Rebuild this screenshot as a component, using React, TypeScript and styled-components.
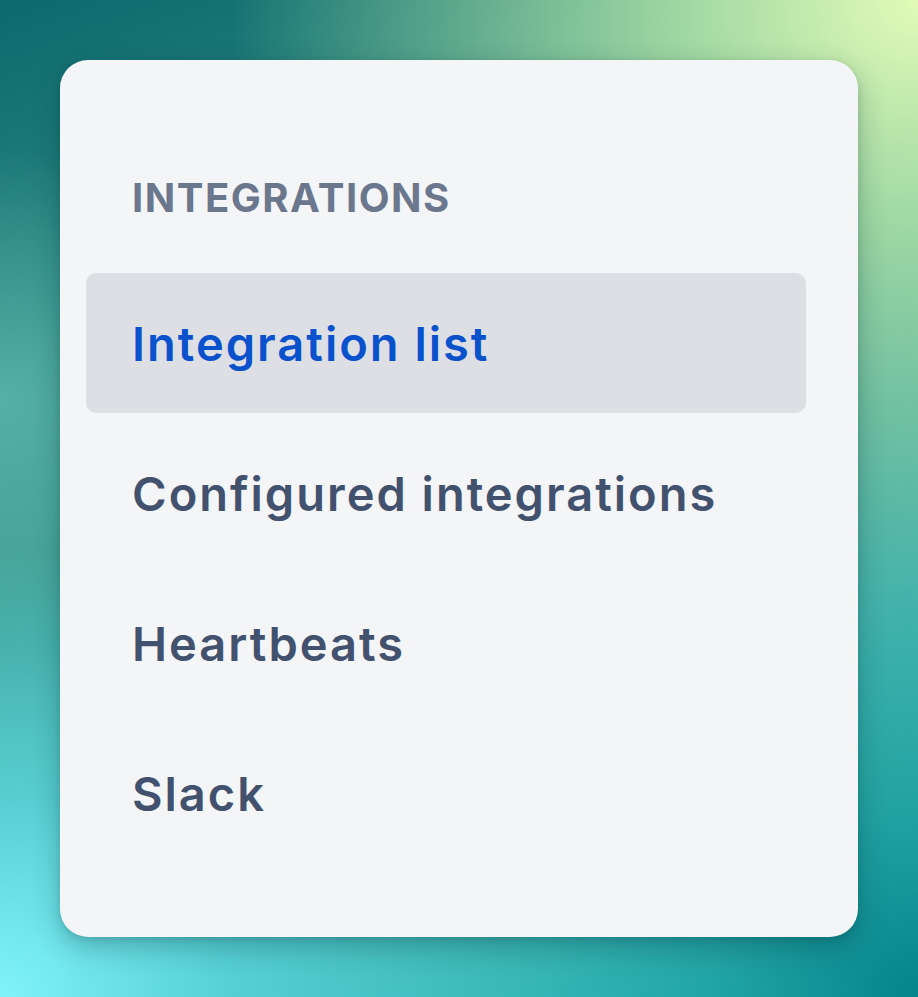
import React from 'react'
import styled, { createGlobalStyle } from 'styled-components'

const GlobalStyle = createGlobalStyle`
  html, body {
    margin: 0;
    padding: 0;
  }
  body {
    font-family: Inter, 'Noto Sans', 'Liberation Sans', sans-serif;
    -webkit-font-smoothing: antialiased;
  }
`

const Backdrop = styled.div`
  box-sizing: border-box;
  width: 918px;
  height: 997px;
  padding: 60px;
  display: flex;
  background:
    radial-gradient(ellipse 75% 60% at 100% 0%, #e2fbb8 0%, rgba(180, 230, 168, 0.85) 35%, rgba(140, 210, 170, 0) 100%),
    radial-gradient(ellipse 55% 45% at 0% 100%, #80f3fa 0%, rgba(95, 220, 228, 0.7) 45%, rgba(70, 190, 200, 0) 100%),
    radial-gradient(ellipse 45% 40% at 100% 100%, #05848b 0%, rgba(20, 150, 150, 0.6) 50%, rgba(40, 170, 170, 0) 100%),
    radial-gradient(ellipse 30% 25% at 0% 40%, rgba(110, 200, 185, 0.6) 0%, rgba(110, 200, 185, 0) 100%),
    linear-gradient(160deg, #0c6a6d 0%, #3c998f 40%, #45b2aa 68%, #32bcbf 100%);
`

const Card = styled.nav`
  flex: 1;
  display: flex;
  flex-direction: column;
  padding: 114px 52px 74px 26px;
  background: #f4f5f7;
  border-radius: 28px;
  box-shadow: 0 10px 28px rgba(0, 40, 50, 0.28), 0 2px 6px rgba(0, 40, 50, 0.12);
`

const Heading = styled.div`
  padding-left: 46px;
  height: 48px;
  line-height: 48px;
  margin-bottom: 51px;
  font-size: 40px;
  font-weight: 700;
  letter-spacing: 1.5px;
  text-transform: uppercase;
  color: #6b778c;
`

const List = styled.div`
  display: flex;
  flex-direction: column;
  gap: 10px;
`

const Item = styled.a<{ $active?: boolean }>`
  display: flex;
  align-items: center;
  height: 140px;
  padding-left: 46px;
  border-radius: 10px;
  font-size: 47px;
  font-weight: 600;
  letter-spacing: 2px;
  text-decoration: none;
  color: ${({ $active }) => ($active ? '#0a52cc' : '#42526e')};
  background: ${({ $active }) => ($active ? '#dddfe4' : 'transparent')};
`

const items = ['Integration list', 'Configured integrations', 'Heartbeats', 'Slack']

const App: React.FC = () => {
  return (
    <>
      <GlobalStyle />
      <Backdrop>
        <Card>
          <Heading>Integrations</Heading>
          <List>
            {items.map((label, i) => (
              <Item key={label} $active={i === 0}>
                {label}
              </Item>
            ))}
          </List>
        </Card>
      </Backdrop>
    </>
  )
}

export default App
